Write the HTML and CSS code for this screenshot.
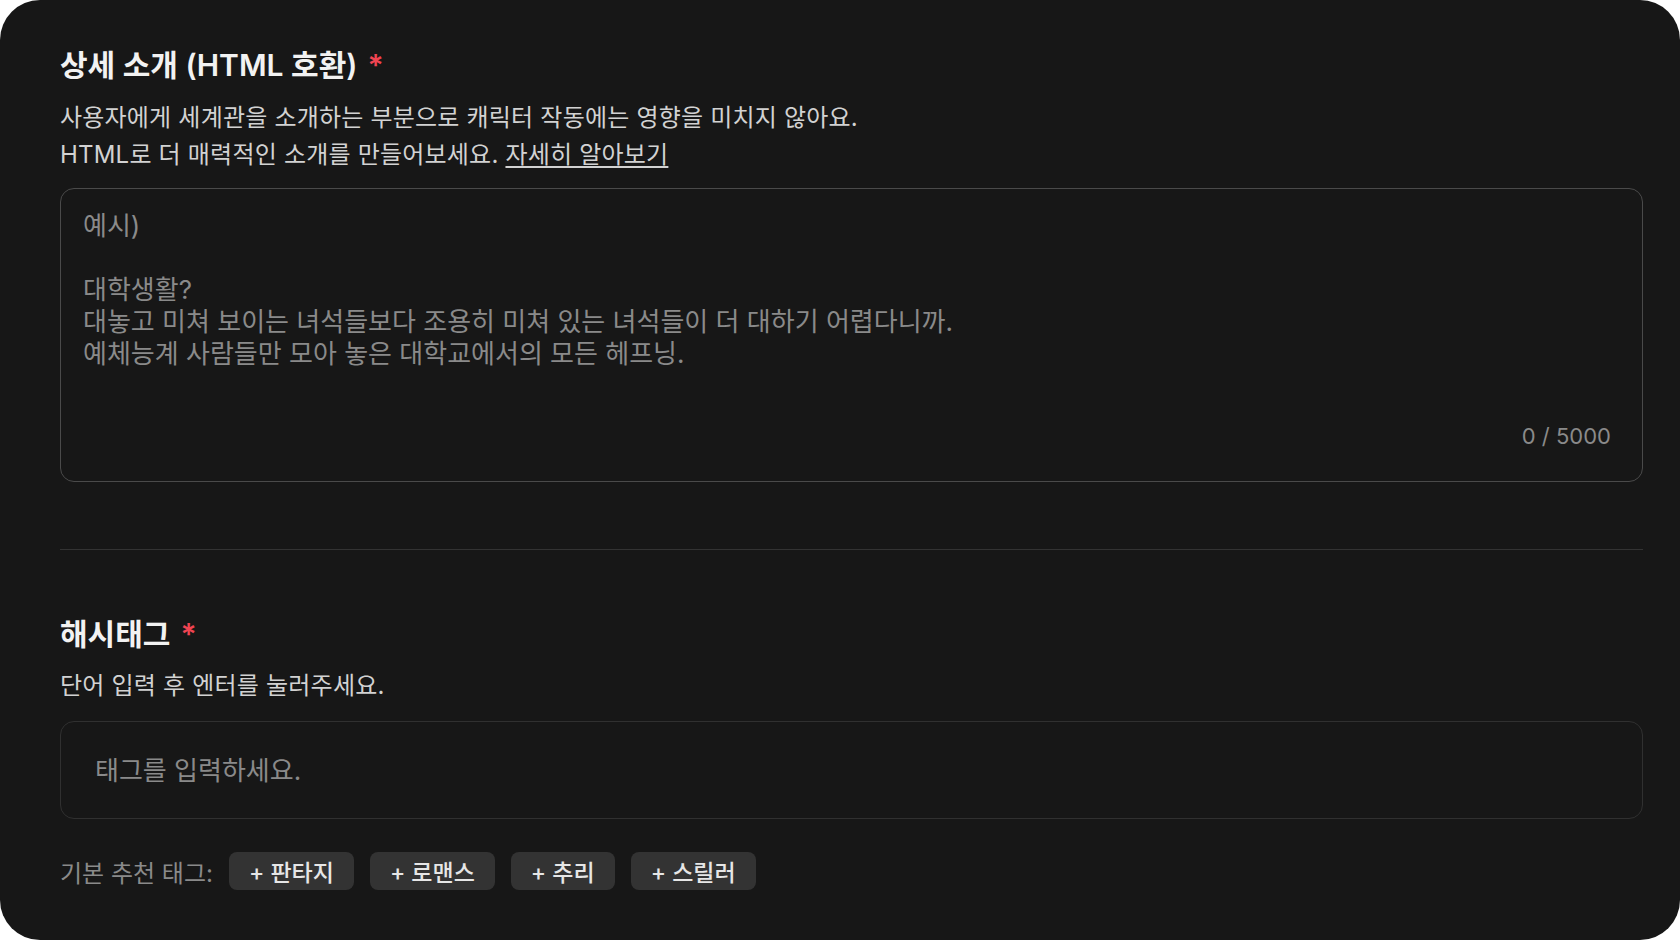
FILE: index.html
```html
<!DOCTYPE html>
<html lang="ko">
<head>
    <meta charset="UTF-8">
    <meta name="viewport" content="width=device-width, initial-scale=1.0">
    <title>상세 소개</title>
    <link rel="stylesheet" href="styles.css">
</head>
<body>

<div class="card">
    <section class="field">
        <h2 class="field-title">상세 소개 (HTML 호환)<span class="required">*</span></h2>
        <p class="field-desc">
            사용자에게 세계관을 소개하는 부분으로 캐릭터 작동에는 영향을 미치지 않아요.<br>
            HTML로 더 매력적인 소개를 만들어보세요. <a href="#" class="more-link">자세히 알아보기</a>
        </p>
        <div class="textarea-box">
            <textarea class="intro-input" placeholder="예시)&#10;&#10;대학생활?&#10;대놓고 미쳐 보이는 녀석들보다 조용히 미쳐 있는 녀석들이 더 대하기 어렵다니까.&#10;예체능계 사람들만 모아 놓은 대학교에서의 모든 헤프닝."></textarea>
            <div class="char-count">0 / 5000</div>
        </div>
    </section>

    <hr class="divider">

    <section class="field field-tags">
        <h2 class="field-title">해시태그<span class="required">*</span></h2>
        <p class="field-desc">단어 입력 후 엔터를 눌러주세요.</p>
        <input type="text" class="tag-input" placeholder="태그를 입력하세요.">
        <div class="suggest-row">
            <span class="suggest-label">기본 추천 태그:</span>
            <button class="tag-chip">+ 판타지</button>
            <button class="tag-chip">+ 로맨스</button>
            <button class="tag-chip">+ 추리</button>
            <button class="tag-chip">+ 스릴러</button>
        </div>
    </section>
</div>

</body>
</html>
```

FILE: styles.css
```css
html,
body {
    height: 100%;
    margin: 0;
    padding: 0;
    background-color: #ffffff;
}

body {
    font-family: Inter, "Noto Sans CJK KR", sans-serif;
    overflow: hidden;
}

.card {
    box-sizing: border-box;
    height: 940px;
    padding: 47px 37px 0 60px;
    background-color: #171717;
    border-radius: 40px;
}

.field-title {
    margin: 0;
    font-size: 30px;
    line-height: 36px;
    font-weight: 600;
    color: #f2f2f2;
}

.required {
    margin-left: 10px;
    color: #f04452;
}

.field-desc {
    margin: 16px 0 0;
    font-size: 24px;
    line-height: 37px;
    letter-spacing: 0.2px;
    color: #d2d2d2;
}

.more-link {
    color: inherit;
    text-decoration: underline;
    text-underline-offset: 3px;
}

/* 상세 소개 입력 */
.textarea-box {
    box-sizing: border-box;
    height: 294px;
    margin-top: 15px;
    padding: 21px 31px 30px 22px;
    border: 1px solid #4a4a4a;
    border-radius: 14px;
    display: flex;
    flex-direction: column;
}

.intro-input {
    flex: 1;
    padding: 0;
    border: none;
    outline: none;
    resize: none;
    background: transparent;
    font-family: inherit;
    font-size: 26px;
    line-height: 32px;
    color: #dddddd;
}

.intro-input::placeholder {
    color: #8a8a8a;
}

.char-count {
    text-align: right;
    font-size: 22px;
    line-height: 30px;
    color: #8a8a8a;
}

.divider {
    margin: 67px 0 0;
    border: none;
    border-top: 1px solid #333333;
}

/* 해시태그 */
.field-tags {
    margin-top: 66px;
}

.field-tags .field-desc {
    margin-top: 15px;
}

.tag-input {
    display: block;
    box-sizing: border-box;
    width: 100%;
    height: 98px;
    margin-top: 17px;
    padding: 0 34px;
    border: 1px solid #303030;
    border-radius: 14px;
    outline: none;
    background: transparent;
    font-family: inherit;
    font-size: 26px;
    color: #dddddd;
}

.tag-input::placeholder {
    color: #8a8a8a;
}

.suggest-row {
    display: flex;
    align-items: center;
    gap: 16px;
    margin-top: 33px;
}

.suggest-label {
    font-size: 24px;
    color: #8a8a8a;
}

.tag-chip {
    height: 38px;
    padding: 0 20px;
    border: none;
    border-radius: 8px;
    background-color: #333333;
    font-family: inherit;
    font-size: 23px;
    font-weight: 500;
    color: #e6e6e6;
    cursor: pointer;
}
```
